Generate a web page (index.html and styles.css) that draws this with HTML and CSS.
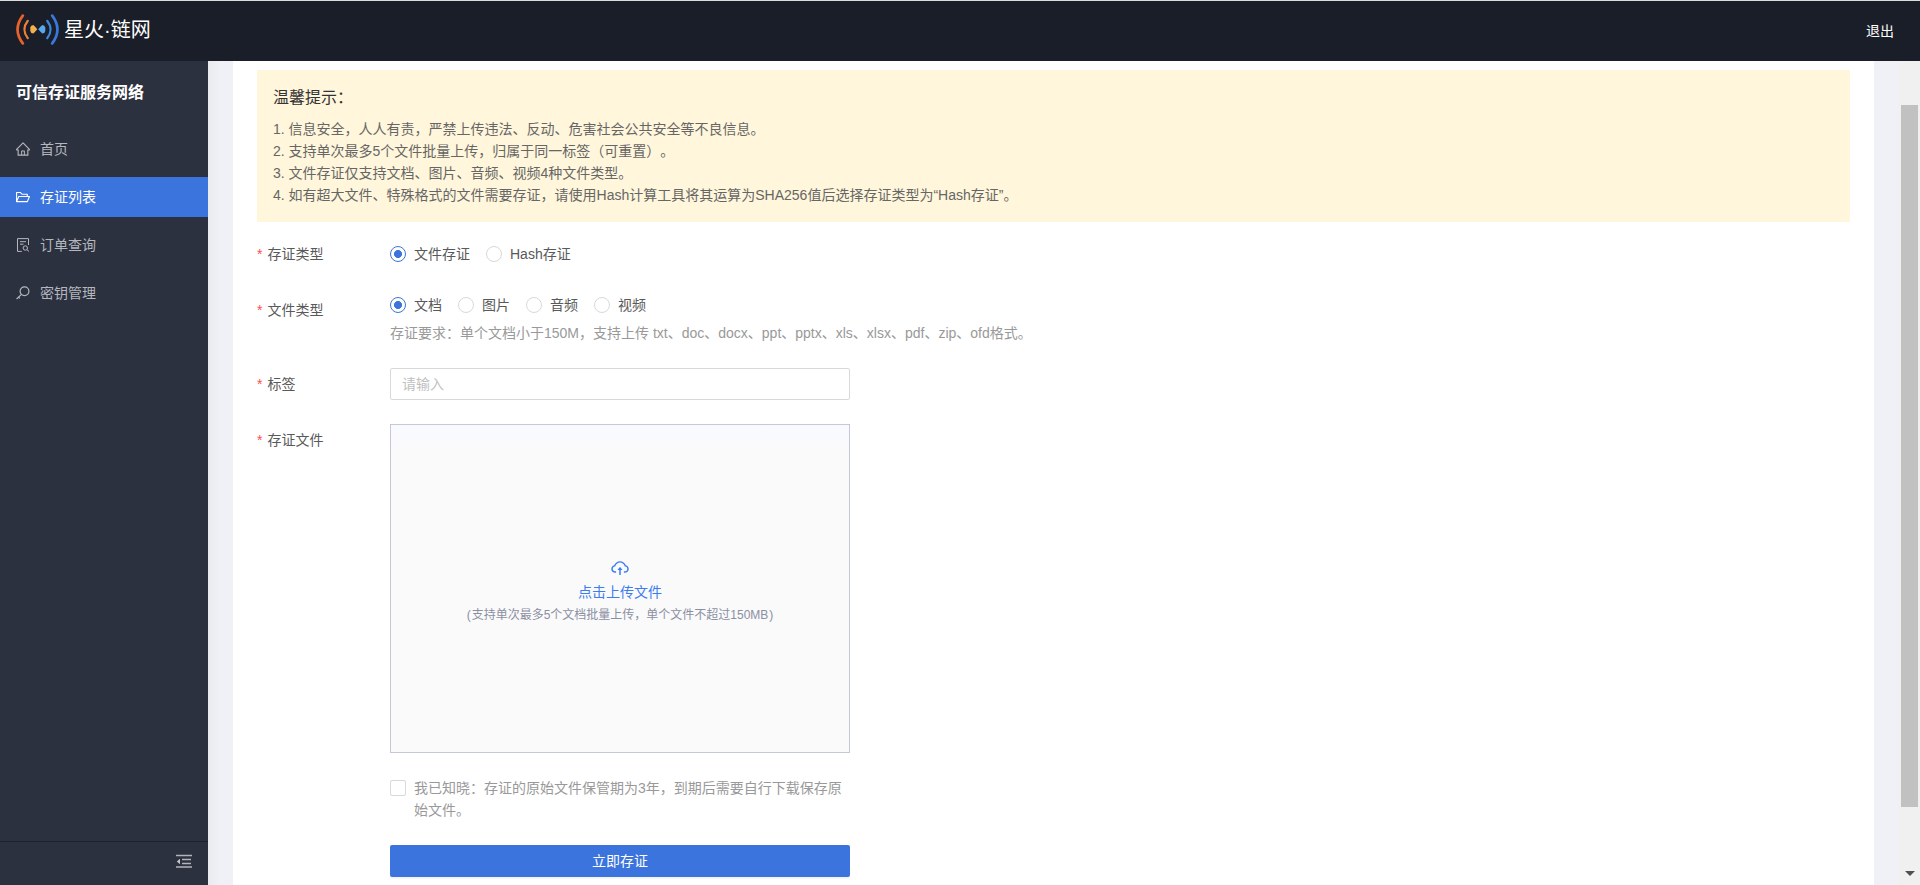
FILE: index.html
```html
<!DOCTYPE html>
<html lang="zh-CN">
<head>
<meta charset="utf-8">
<title>可信存证服务网络</title>
<link rel="stylesheet" href="styles.css">
</head>
<body>
<div class="app">
  <header class="header">
    <div class="brand">
      <svg class="brand-mark" width="44" height="31" viewBox="0 0 44 31" fill="none" stroke-linecap="round">
        <path d="M6.800 1.600Q-3.700 15.500 6.800 29.400" stroke="#e8622c" stroke-width="2.700"/>
        <path d="M11.800 6.800Q5 15.500 11.800 24.200" stroke="#ee8136" stroke-width="2.200"/>
        <path d="M14.300 13.500Q14.800 11 17.300 11Q19 12.500 21.300 15.300Q19 18 17.300 19.600Q14.800 19.600 14.300 17Z" fill="#f2b04f"/>
        <path d="M29.300 13.500Q28.800 11 26.300 11Q24.600 12.500 22.200 15.300Q24.600 18 26.300 19.600Q28.800 19.600 29.300 17Z" fill="#58a8ee"/>
        <path d="M31.200 6.800Q38 15.500 31.200 24.200" stroke="#3d86de" stroke-width="2.200"/>
        <path d="M36.200 1.600Q46.700 15.500 36.200 29.400" stroke="#3a78dc" stroke-width="2.700"/>
      </svg>
      <span class="brand-name">星火·链网</span>
    </div>
    <a class="logout">退出</a>
  </header>
  <div class="body">
    <aside class="sidebar">
      <div class="sidebar-title">可信存证服务网络</div>
      <nav class="menu">
        <a class="menu-item">
          <svg class="icon" viewBox="64 64 896 896" fill="currentColor"><path d="M946.500 505L560.100 118.800l-25.900-25.900a31.500 31.500 0 0 0-44.400 0L77.500 505a63.900 63.900 0 0 0-18.800 46c.4 35.200 29.700 63.300 64.900 63.300h42.500V940h691.800V614.300h43.400c17.100 0 33.200-6.700 45.300-18.800a63.600 63.600 0 0 0 18.700-45.300c0-17-6.700-33.100-18.800-45.200zM568 868H456V664h112v204zm217.900-325.700V868H632V640c0-22.100-17.900-40-40-40H432c-22.100 0-40 17.900-40 40v228H238.100V542.300h-96l370-369.700 23.100 23.100L882 542.300h-96.100z"/></svg>
          <span>首页</span>
        </a>
        <a class="menu-item active">
          <svg class="icon" viewBox="64 64 896 896" fill="currentColor"><path d="M928 444H820V330.400c0-17.700-14.300-32-32-32H473L355.700 186.200a8.150 8.150 0 0 0-5.500-2.200H96c-17.700 0-32 14.300-32 32v592c0 17.700 14.300 32 32 32h698c13 0 24.800-7.900 29.700-20l134-332c1.500-3.800 2.300-7.900 2.300-12 0-17.700-14.300-32-32-32zM136 256h188.500l119.600 114.400H748V444H238c-13 0-24.800 7.900-29.700 20L136 643.200V256zm635.300 512H159l103.300-256h612.400L771.300 768z"/></svg>
          <span>存证列表</span>
        </a>
        <a class="menu-item">
          <svg class="icon" viewBox="0 0 14 14" fill="none" stroke="currentColor"><path d="M5.800 13.400H1.500V.600H12.500V7M4 3.700h6M4 6.200h3.500M11 11.700l2 1.800"/><circle cx="9.300" cy="10" r="2.200"/></svg>
          <span>订单查询</span>
        </a>
        <a class="menu-item">
          <svg class="icon" viewBox="0 0 14 14" fill="none" stroke="currentColor" stroke-width="1.200"><circle cx="8.500" cy="5.300" r="4.400"/><path d="M5.200 8.600L.600 13M2.500 11l1.300 1.300"/></svg>
          <span>密钥管理</span>
        </a>
      </nav>
      <div class="sidebar-foot">
        <svg width="16" height="16" viewBox="0 0 16 16"><path d="M0 1.500h16M6 5.500h9M6 9.500h9M0 13h16" stroke="#b1b4bb" stroke-width="1.300"/><path d="M.8 7.500L4 4.800v5.400Z" fill="#c3c5ca"/></svg>
      </div>
    </aside>
    <main class="content">
      <section class="card">
        <div class="notice">
          <h2 class="notice-title">温馨提示：</h2>
          <p>1. 信息安全，人人有责，严禁上传违法、反动、危害社会公共安全等不良信息。</p>
          <p>2. 支持单次最多5个文件批量上传，归属于同一标签（可重置）。</p>
          <p>3. 文件存证仅支持文档、图片、音频、视频4种文件类型。</p>
          <p>4. 如有超大文件、特殊格式的文件需要存证，请使用Hash计算工具将其运算为SHA256值后选择存证类型为“Hash存证”。</p>
        </div>
        <form class="form">
          <div class="row">
            <div class="label">存证类型</div>
            <div class="radios">
              <label class="radio"><i class="dot checked"></i>文件存证</label>
              <label class="radio"><i class="dot"></i>Hash存证</label>
            </div>
          </div>
          <div class="row">
            <div class="label">文件类型</div>
            <div class="field">
              <div class="radios compact">
                <label class="radio"><i class="dot checked"></i>文档</label>
                <label class="radio"><i class="dot"></i>图片</label>
                <label class="radio"><i class="dot"></i>音频</label>
                <label class="radio"><i class="dot"></i>视频</label>
              </div>
              <div class="hint">存证要求：单个文档小于150M，支持上传 txt、doc、docx、ppt、pptx、xls、xlsx、pdf、zip、ofd格式。</div>
            </div>
          </div>
          <div class="row">
            <div class="label">标签</div>
            <input class="input" type="text" placeholder="请输入">
          </div>
          <div class="row">
            <div class="label">存证文件</div>
            <div class="upload">
              <svg width="20" height="20" viewBox="0 0 1024 1024" fill="currentColor"><path d="M518.300 459a8 8 0 0 0-12.600 0l-112 141.700a7.980 7.980 0 0 0 6.300 12.900h73.900V856c0 4.400 3.600 8 8 8h60c4.400 0 8-3.600 8-8V613.700H624c6.700 0 10.400-7.700 6.300-12.900L518.300 459z"/><path d="M811.400 366.700C765.600 245.900 648.900 160 512.200 160S258.800 245.800 213 366.600C127.300 389.100 64 467.200 64 560c0 110.500 89.500 200 199.900 200H304c4.400 0 8-3.600 8-8v-60c0-4.400-3.600-8-8-8h-40.100c-33.700 0-65.400-13.400-89-37.700-23.500-24.200-36-56.800-34.900-90.600.9-26.400 9.900-51.200 26.200-72.100 16.700-21.300 40.100-36.800 66.100-43.700l37.900-9.900 13.900-36.600c8.600-22.800 20.600-44.100 35.700-63.400a245.600 245.600 0 0 1 52.400-49.900c41.100-28.900 89.500-44.200 140-44.200s98.900 15.300 140 44.200c19.900 14 37.500 30.800 52.400 49.900 15.100 19.300 27.100 40.700 35.700 63.400l13.800 36.500 37.800 10C846.100 454.500 884 503.800 884 560c0 33.100-12.900 64.300-36.300 87.700a123.070 123.070 0 0 1-87.600 36.300H720c-4.400 0-8 3.600-8 8v60c0 4.400 3.600 8 8 8h40.100C870.500 760 960 670.500 960 560c0-92.700-63.100-170.700-148.600-193.300z"/></svg>
              <div class="upload-title">点击上传文件</div>
              <div class="upload-sub"><span class="paren">(</span>支持单次最多5个文档批量上传，单个文件不超过150MB<span class="paren-end">)</span></div>
            </div>
          </div>
          <label class="agree"><i class="box"></i><span>我已知晓：存证的原始文件保管期为3年，到期后需要自行下载保存原始文件。</span></label>
          <button class="submit" type="button">立即存证</button>
        </form>
      </section>
    </main>
    <div class="scrollbar"><div class="thumb"></div><div class="arrow"></div></div>
  </div>
</div>
</body>
</html>
```
FILE: styles.css
```css
* { box-sizing: border-box; }
body {
  margin: 0;
  overflow: hidden;
  font: 14px/22px "Liberation Sans", "Noto Sans CJK SC", sans-serif;
  text-spacing-trim: space-all;
  color: #595959;
}
p, h2 { margin: 0; }
.app { display: flex; flex-direction: column; height: 885px; border-top: 1px solid #d9dedd; }
.header {
  flex: 0 0 60px;
  display: flex;
  align-items: center;
  justify-content: space-between;
  padding: 0 26px 0 16px;
  background: #1a1e28;
  color: #fff;
}
.brand { display: flex; align-items: center; gap: 4px; padding-bottom: 4px; }
.brand-mark { display: block; }
.brand-name { padding-top: 1px; font-size: 20px; line-height: 28px; }
.body { flex: 1; display: flex; min-height: 0; }
.sidebar { width: 208px; display: flex; flex-direction: column; background: #2c313f; color: #b4b7be; }
.sidebar-title { padding: 21px 16px 0; height: 68px; font-size: 16px; font-weight: 700; color: #fff; }
.menu { flex: 1; display: flex; flex-direction: column; gap: 8px; }
.menu-item { display: flex; align-items: center; gap: 10px; height: 40px; padding-left: 16px; }
.menu-item.active { background: #3b74dd; color: #fff; }
.icon { width: 14px; height: 14px; overflow: visible; }
.sidebar-foot {
  height: 44px;
  display: flex;
  justify-content: flex-end;
  padding: 12px 16px 0;
  border-top: 1px solid #1f2330;
}
.content { flex: 1; padding: 0 24px 0 25px; background: linear-gradient(90deg, #e9ebef, #f0f1f6 12px); }
.card { height: 100%; padding: 9px 24px 0; background: #fff; }
.notice { height: 152px; padding: 17px 16px 0; background: #fff6db; color: #666; }
.notice-title { margin-bottom: 9px; font-size: 16px; line-height: 22px; font-weight: 400; color: #333; }
.form { display: flex; flex-direction: column; padding-top: 16px; }
.row { display: flex; align-items: flex-start; margin-bottom: 24px; }
.label { width: 133px; line-height: 32px; }
.label::before { content: "*"; margin-right: 5px; color: #ff4d4f; }
.radios { display: flex; align-items: center; gap: 16px; height: 32px; }
.radios.compact { height: 22px; }
.radio { display: flex; align-items: center; gap: 8px; }
.dot { width: 16px; height: 16px; border: 1px solid #d9d9d9; border-radius: 50%; }
.dot.checked { border-color: #3b74dd; background: radial-gradient(circle, #3b74dd 3.700px, #fff 4.300px); }
.hint { margin-top: 6px; color: #999; }
.input {
  width: 460px;
  height: 32px;
  padding: 0 11px;
  border: 1px solid #d9d9d9;
  border-radius: 2px;
  font: inherit;
}
.input::placeholder { color: #bfbfbf; }
.upload {
  width: 460px;
  height: 329px;
  display: flex;
  flex-direction: column;
  align-items: center;
  justify-content: center;
  padding-top: 8px;
  border: 1px solid #c5c8d6;
  background: linear-gradient(#f9faff, #fafafa 32px);
  color: #3b7cf0;
}
.upload-title { margin-top: 3px; }
.upload-sub { font-size: 12px; line-height: 24px; color: #8b8fa3; }
.paren { margin-right: 1px; }
.paren-end { margin-left: 1px; }
.agree { display: flex; gap: 8px; width: 460px; margin-left: 133px; color: #999; }
.box { flex: 0 0 16px; height: 16px; margin-top: 3px; border: 1px solid #d9d9d9; border-radius: 2px; }
.submit {
  width: 460px;
  height: 32px;
  margin: 24px 0 0 133px;
  padding: 0;
  border: 0;
  border-radius: 2px;
  background: #3b74dd;
  color: #fff;
  font: inherit;
  box-shadow: 0 2px 0 rgba(0, 0, 0, 0.04);
}
.scrollbar {
  width: 22px;
  display: flex;
  flex-direction: column;
  align-items: center;
  justify-content: space-between;
  padding: 44px 0 9px 1px;
  background: #f0f0f0;
}
.thumb { width: 17px; height: 702px; background: #c1c1c1; }
.arrow { border: 5px solid transparent; border-top-color: #505050; border-bottom: 0; }
```
